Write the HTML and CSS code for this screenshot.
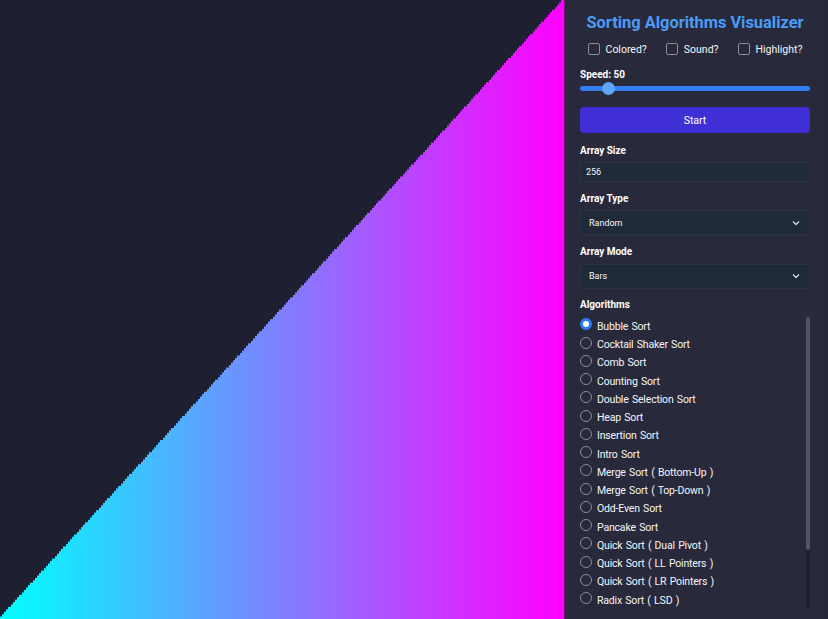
FILE: index.html
```html
<!DOCTYPE html>
<html lang="en">
<head>
  <meta charset="UTF-8" />
  <meta name="viewport" content="width=device-width, initial-scale=1.0"/>
  <title>Sorting Algorithms Visualizer</title>
  <link rel="stylesheet" href="styles.css">
</head>
<body>

<div class="app">
  <canvas id="bars" class="stage" width="564" height="619"></canvas>

  <div class="sidebar">
    <h1>Sorting Algorithms Visualizer</h1>

    <div class="options">
      <label class="option"><input type="checkbox" /> <span>Colored?</span></label>
      <label class="option"><input type="checkbox" /> <span>Sound?</span></label>
      <label class="option"><input type="checkbox" /> <span>Highlight?</span></label>
    </div>

    <div class="speed">
      <div class="field-label">Speed: 50</div>
      <div class="slider"><div class="slider-thumb"></div></div>
    </div>

    <button class="start">Start</button>

    <div class="field field-size">
      <div class="field-label">Array Size</div>
      <div class="input">256</div>
    </div>

    <div class="field">
      <div class="field-label">Array Type</div>
      <div class="select">
        <span>Random</span>
        <svg viewBox="0 0 10 10" width="10" height="10"><path d="M2 3.5 L5 6.5 L8 3.5" fill="none" stroke="#d5d7e0" stroke-width="1.3"/></svg>
      </div>
    </div>

    <div class="field">
      <div class="field-label">Array Mode</div>
      <div class="select">
        <span>Bars</span>
        <svg viewBox="0 0 10 10" width="10" height="10"><path d="M2 3.5 L5 6.5 L8 3.5" fill="none" stroke="#d5d7e0" stroke-width="1.3"/></svg>
      </div>
    </div>

    <div class="field-label">Algorithms</div>
    <div class="algorithms">
      <ul id="algorithm-list" class="algorithm-list"></ul>
      <div class="scroll-track"><div class="scroll-thumb"></div></div>
    </div>
  </div>
</div>

<script src="script.js"></script>
</body>
</html>
```

FILE: styles.css
```css
* {
  box-sizing: border-box;
}

html, body {
  height: 100%;
}

body {
  font-family: Roboto, "Open Sans", sans-serif;
  margin: 0;
  background: #1e1f30;
  color: #f4f5f8;
  overflow: hidden;
}

.app {
  display: flex;
  height: 619px;
}

.stage {
  display: block;
  width: 564px;
  height: 619px;
  flex: none;
}

.sidebar {
  width: 264px;
  flex: none;
  height: 619px;
  overflow: hidden;
  background: #282a3c;
  padding: 12px 18px 0 16px;
  box-shadow: inset 1px 0 0 #7a1180, inset -4px 0 0 #262836;
}

h1 {
  margin: 0 0 6px;
  text-align: center;
  font-size: 16.4px;
  line-height: 21px;
  font-weight: 700;
  color: #4a9cf6;
}

.options {
  display: flex;
  justify-content: center;
  gap: 19px;
  height: 20px;
  align-items: center;
  margin-bottom: 10px;
}

.option {
  display: flex;
  align-items: center;
  gap: 6px;
  font-size: 10.5px;
}

.option input {
  appearance: none;
  margin: 0;
  width: 12px;
  height: 12px;
  border: 1.3px solid #8b8d98;
  border-radius: 2px;
}

.field-label {
  font-size: 10px;
  line-height: 12px;
  font-weight: 700;
  color: #fff;
}

.slider {
  margin-top: 5px;
  height: 5px;
  border-radius: 3px;
  background: #327ff6;
  position: relative;
}

.slider-thumb {
  position: absolute;
  left: 22px;
  top: -4px;
  width: 13px;
  height: 13px;
  border-radius: 50%;
  background: #60a5fa;
}

.start {
  display: block;
  width: 100%;
  height: 26px;
  margin: 16px 0 12px;
  border: none;
  border-radius: 4px;
  background: #412fd6;
  color: #fff;
  font-family: inherit;
  font-size: 10.5px;
}

.field {
  margin-bottom: 10.75px;
}

.field .field-label {
  margin-bottom: 5.5px;
}

.field-size .field-label {
  margin-bottom: 5px;
}

.input {
  height: 20px;
  padding: 0 5px;
  line-height: 18px;
  font-size: 9px;
  background: #1f2937;
  border: 1px solid #2b3346;
  border-radius: 3px;
}

.select {
  height: 25px;
  padding: 0 8px;
  display: flex;
  align-items: center;
  justify-content: space-between;
  font-size: 9px;
  background: #1f2937;
  border: 1px solid #2b3346;
  border-radius: 3px;
}

.algorithms {
  display: flex;
  justify-content: space-between;
  margin-top: 6px;
}

.algorithm-list {
  list-style: none;
  margin: 0;
  padding: 0;
}

.algorithm-list li {
  display: flex;
  align-items: center;
  gap: 5px;
  height: 18.25px;
  font-size: 10.5px;
  letter-spacing: -0.18px;
  word-spacing: 0.9px;
}

.radio {
  width: 12px;
  height: 12px;
  border: 1.3px solid #8b8d98;
  border-radius: 50%;
  position: relative;
  top: -2px;
}

.radio.checked {
  border: 3.5px solid #2f7bf6;
  background: #fff;
}

.scroll-track {
  width: 4px;
  height: 292px;
  background: #1e1f30;
  border-radius: 2px;
}

.scroll-thumb {
  height: 233px;
  background: #52546a;
  border-radius: 2px;
}
```

FILE: script.js
```js
const canvas = document.getElementById('bars');
const ctx = canvas.getContext('2d');
const size = 256;
const barWidth = canvas.width / size;

ctx.fillStyle = '#1e1f30';
ctx.fillRect(0, 0, canvas.width, canvas.height);

for (let i = 0; i < size; i++) {
  const t = i / (size - 1);
  const h = ((i + 1) / size) * canvas.height;
  const r = Math.round(255 * t);
  const g = Math.round(255 * (1 - t));
  ctx.fillStyle = `rgb(${r},${g},255)`;
  ctx.fillRect(Math.floor(i * barWidth), canvas.height - h, Math.ceil(barWidth), h);
}

const algorithms = [
  'Bubble Sort',
  'Cocktail Shaker Sort',
  'Comb Sort',
  'Counting Sort',
  'Double Selection Sort',
  'Heap Sort',
  'Insertion Sort',
  'Intro Sort',
  'Merge Sort ( Bottom-Up )',
  'Merge Sort ( Top-Down )',
  'Odd-Even Sort',
  'Pancake Sort',
  'Quick Sort ( Dual Pivot )',
  'Quick Sort ( LL Pointers )',
  'Quick Sort ( LR Pointers )',
  'Radix Sort ( LSD )'
];

const list = document.getElementById('algorithm-list');
algorithms.forEach((name, i) => {
  const li = document.createElement('li');
  li.innerHTML = `<span class="radio${i === 0 ? ' checked' : ''}"></span><span>${name}</span>`;
  list.appendChild(li);
});
```
